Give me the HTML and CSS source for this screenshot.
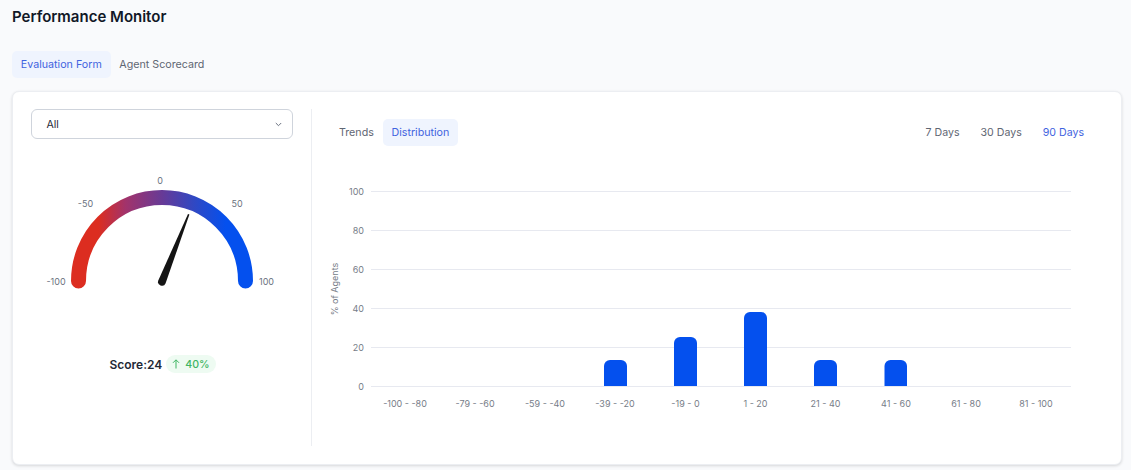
FILE: index.html
```html
<!DOCTYPE html>
<html lang="en">
<head>
  <meta charset="UTF-8">
  <title>Performance Monitor</title>
  <link rel="stylesheet" href="styles.css">
</head>
<body>
  <h1 class="page-title">Performance Monitor</h1>

  <!-- Top tabs -->
  <div class="tabs main-tabs">
    <button class="tab active">Evaluation Form</button>
    <button class="tab">Agent Scorecard</button>
  </div>

  <div class="card">
    <!-- Gauge side -->
    <div class="left-panel">
      <div class="select">
        <span>All</span>
        <svg width="7" height="5" viewBox="0 0 7 5"><path d="M.8 1l2.700 2.700L6.200 1" fill="none" stroke="#6b7280" stroke-width="1"/></svg>
      </div>

      <svg class="gauge" width="262" height="170" viewBox="31 165 262 170">
        <defs>
          <linearGradient id="gauge-fill" gradientUnits="userSpaceOnUse" x1="71" y1="0" x2="253" y2="0">
            <stop offset="0.15" stop-color="#dc2d20"/>
            <stop offset="0.3" stop-color="#a2336b"/>
            <stop offset="0.5" stop-color="#673a96"/>
            <stop offset="0.68" stop-color="#2f48c4"/>
            <stop offset="0.85" stop-color="#0450ee"/>
          </linearGradient>
        </defs>
        <path d="M78.5 281A83.5 83.5 0 0 1 245.5 281" fill="none" stroke="url(#gauge-fill)" stroke-width="15" stroke-linecap="round"/>
        <path d="M158.4 280.3L188 214L189.4 214.6L165.6 283.3A3.9 3.9 0 0 1 158.4 280.3Z" fill="#141414"/>
        <g class="gauge-label">
          <text x="56" y="285" text-anchor="middle">-100</text>
          <text x="85.500" y="207" text-anchor="middle">-50</text>
          <text x="160" y="184" text-anchor="middle">0</text>
          <text x="237" y="207" text-anchor="middle">50</text>
          <text x="266.500" y="285" text-anchor="middle">100</text>
        </g>
      </svg>

      <div class="score">
        <span>Score:24</span>
        <span class="badge">
          <svg width="8" height="10" viewBox="0 0 8 10"><path d="M4 9.500V1M1 3.800L4 .8l3 3" fill="none" stroke="#3fb563" stroke-width="1"/></svg>
          40%
        </span>
      </div>
    </div>

    <!-- Chart side -->
    <div class="right-panel">
      <div class="chart-head">
        <div class="tabs">
          <button class="tab">Trends</button>
          <button class="tab active">Distribution</button>
        </div>
        <div class="ranges">
          <span>7 Days</span>
          <span>30 Days</span>
          <span class="current">90 Days</span>
        </div>
      </div>

      <svg class="chart" width="780" height="265" viewBox="312 165 780 265">
        <g class="grid">
          <line x1="371" x2="1071" y1="191.500" y2="191.500"/>
          <line x1="371" x2="1071" y1="230.500" y2="230.500"/>
          <line x1="371" x2="1071" y1="269.500" y2="269.500"/>
          <line x1="371" x2="1071" y1="308.500" y2="308.500"/>
          <line x1="371" x2="1071" y1="347.500" y2="347.500"/>
          <line x1="371" x2="1071" y1="386.500" y2="386.500"/>
        </g>
        <g class="axis" text-anchor="end">
          <text x="364" y="195">100</text>
          <text x="364" y="234">80</text>
          <text x="364" y="273">60</text>
          <text x="364" y="312">40</text>
          <text x="364" y="351">20</text>
          <text x="364" y="390">0</text>
        </g>
        <text class="axis" transform="translate(338 289) rotate(-90)" text-anchor="middle">% of Agents</text>
        <g fill="#0450ee">
          <path d="M604 386V366a6 6 0 0 1 6-6h11a6 6 0 0 1 6 6v20z"/>
          <path d="M674 386V343a6 6 0 0 1 6-6h11a6 6 0 0 1 6 6v43z"/>
          <path d="M744 386V318a6 6 0 0 1 6-6h11a6 6 0 0 1 6 6v68z"/>
          <path d="M814 386V366a6 6 0 0 1 6-6h11a6 6 0 0 1 6 6v20z"/>
          <path d="M884.500 386V366a6 6 0 0 1 6-6h10.500a6 6 0 0 1 6 6v20z"/>
        </g>
        <g class="axis" text-anchor="middle">
          <text x="405" y="407">-100 - -80</text>
          <text x="475" y="407">-79 - -60</text>
          <text x="545" y="407">-59 - -40</text>
          <text x="615" y="407">-39 - -20</text>
          <text x="685.500" y="407">-19 - 0</text>
          <text x="755.500" y="407">1 - 20</text>
          <text x="825.500" y="407">21 - 40</text>
          <text x="896" y="407">41 - 60</text>
          <text x="966" y="407">61 - 80</text>
          <text x="1036" y="407">81 - 100</text>
        </g>
      </svg>
    </div>
  </div>
</body>
</html>
```

FILE: styles.css
```css
/* General styling */
body {
  margin: 0;
  height: 470px;
  overflow: hidden;
  background-color: #f9fafc;
  font-family: Inter, "Liberation Sans", sans-serif;
  color: #111827;
}

.page-title {
  margin: 0;
  padding: 8px 12px 0;
  font-size: 15px;
  line-height: 18px;
  font-weight: 600;
}

/* Tabs */
.tabs {
  display: flex;
  gap: 0;
}

.main-tabs {
  margin: 25px 12px 0;
}

.tab {
  height: 27px;
  padding: 0 8.800px;
  border: none;
  border-radius: 5px;
  background: none;
  font-family: inherit;
  font-size: 10.700px;
  color: #5f6673;
}

.tab.active {
  background-color: #eff4fe;
  color: #3f63e0;
}

/* Main card */
.card {
  display: flex;
  height: 374px;
  margin: 13px 9px 0 12px;
  border: 1px solid #eceef2;
  border-radius: 7px;
  background-color: #fff;
  box-shadow: 0 1px 3px rgba(0, 0, 0, 0.14);
  box-sizing: border-box;
  padding: 17px 0 18px 18px;
}

/* Left panel with the gauge */
.left-panel {
  width: 281px;
  border-right: 1px solid #eceef2;
  box-sizing: border-box;
}

.select {
  display: flex;
  justify-content: space-between;
  align-items: center;
  width: 262px;
  height: 30px;
  box-sizing: border-box;
  padding: 0 10px 0 14.500px;
  border: 1px solid #cfd4dc;
  border-radius: 6px;
  font-size: 10.600px;
  color: #1f2937;
}

.gauge {
  display: block;
  margin-top: 26px;
}

.gauge-label text {
  font-size: 9px;
  fill: #6b7280;
}

.score {
  display: flex;
  justify-content: center;
  align-items: center;
  gap: 4px;
  width: 262px;
  margin-top: 20px;
  padding-left: 1px;
  box-sizing: border-box;
  font-size: 12px;
  font-weight: 600;
  color: #1f2937;
}

.badge {
  display: flex;
  align-items: center;
  gap: 5px;
  height: 18px;
  padding: 0 6px;
  border-radius: 9px;
  background-color: #eefbf2;
  font-size: 10.600px;
  font-weight: 500;
  color: #3fb563;
}

/* Right panel with the chart */
.right-panel {
  flex: 1;
  min-width: 0;
}

.chart-head {
  display: flex;
  justify-content: space-between;
  align-items: center;
  padding: 10px 37px 0 18.200px;
}

.ranges {
  display: flex;
  gap: 21px;
  font-size: 10.600px;
  color: #5f6673;
}

.ranges .current {
  color: #3f63e0;
}

.chart {
  display: block;
  margin-top: 19px;
}

.grid line {
  stroke: #e7e9f0;
  stroke-width: 1;
}

.axis,
.axis text {
  font-size: 9px;
  fill: #777d88;
}
```
